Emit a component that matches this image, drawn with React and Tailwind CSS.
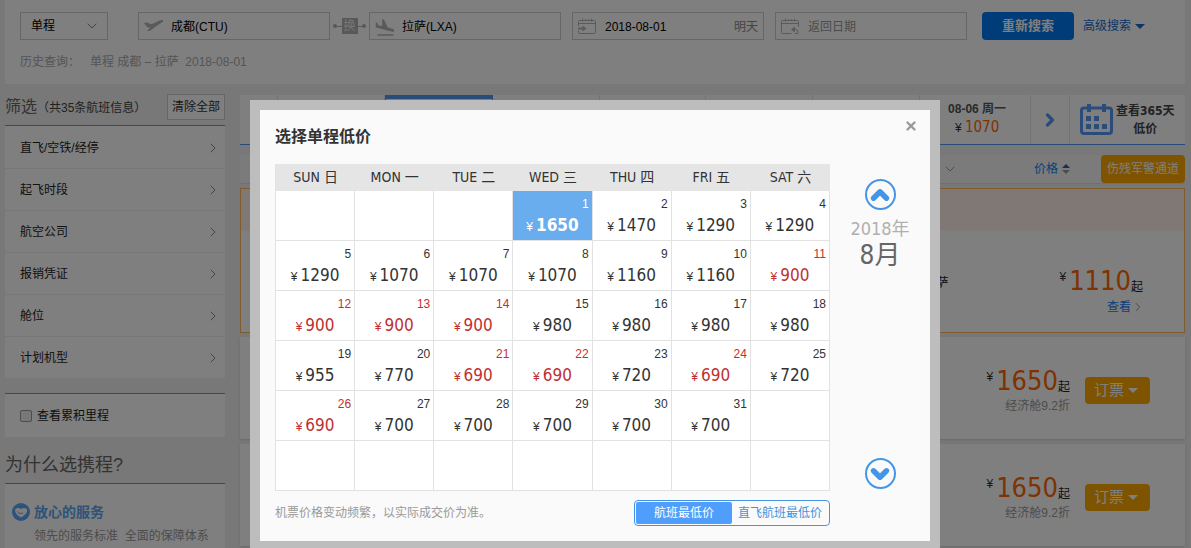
import { ChevronDown, ChevronRight, ChevronUp, X } from 'lucide-react'
import clsx from 'clsx'

const FILTERS = ['直飞/空铁/经停', '起飞时段', '航空公司', '报销凭证', '舱位', '计划机型']

const WEEKDAYS = ['SUN 日', 'MON 一', 'TUE 二', 'WED 三', 'THU 四', 'FRI 五', 'SAT 六']

// lowest fare per day, 1st of August is a Wednesday
const FARES = [
  1650, 1470, 1290, 1290, 1290, 1070, 1070, 1070, 1160, 1160, 900, 900, 900, 900, 980, 980,
  980, 980, 955, 770, 690, 690, 720, 690, 720, 690, 700, 700, 700, 700, 700,
]
const LOW_DAYS = [11, 12, 13, 14, 21, 22, 24, 26]
const FIRST_WEEKDAY = 3
const SELECTED_DAY = 1

const NUM = "font-['DejaVu_Sans_Condensed','Noto_Sans_CJK_SC',sans-serif]"

const weeks = Array.from({ length: 6 }, (_, w) =>
  Array.from({ length: 7 }, (_, d) => {
    const day = w * 7 + d - FIRST_WEEKDAY + 1
    return day >= 1 && day <= FARES.length ? day : null
  })
)

function TakeoffIcon() {
  return (
    <svg viewBox="0 0 20 14" className="w-5 h-3.5 flex-none fill-[#b4b4b4]" aria-hidden="true">
      <path d="M0 4.200 2 3.200 7.500 5.300 15.500 1.600C17 .9 18.700.9 19.200 1.500c.4.700-.4 1.500-1.700 2.300L12.500 7 6.500 11.400 2.800 12.200 6.300 8.300 3.500 8.600z" />
    </svg>
  )
}

function LandingIcon() {
  return (
    <svg viewBox="2 1 20 20" className="w-5 h-5 flex-none fill-[#b4b4b4]" aria-hidden="true">
      <path d="M4.500 19.300h16v1.400h-16zM9.680 14.270l4.350 1.160 5.310 1.420c.8.210 1.620-.260 1.840-1.060.210-.8-.260-1.620-1.060-1.840l-5.310-1.420-3.760-8.020L9.120 4v7.280L5.150 9.950l-.930-2.320-1.450-.390v5.170l1.600.430z" />
    </svg>
  )
}

function DateIcon({ back }) {
  return (
    <svg viewBox="0 0 18 17" className="w-[18px] h-[17px] flex-none" fill="none" stroke="#b4b4b4" aria-hidden="true">
      <path d={back ? 'M17.500 9V3.500a1 1 0 0 0-1-1h-15a1 1 0 0 0-1 1v11a1 1 0 0 0 1 1h9' : 'M.5 8V3.500a1 1 0 0 1 1-1h15a1 1 0 0 1 1 1v11a1 1 0 0 1-1 1h-15a1 1 0 0 1-1-1v-2'} />
      <path d="M.5 5.500h17M4.500.5v3M13.500.5v3M7.500 1v2M10.500 1v2" />
      {back ? (
        <>
          <path d="M11 11.500h3.500a2.500 2.500 0 0 1 2.500 2.500v1.500h-3" />
          <path d="m10 11.500 4-3v6z" fill="#b4b4b4" stroke="none" />
        </>
      ) : (
        <>
          <path d="M0 10.500h5" strokeWidth="2" />
          <path d="m8.500 10.500-4-3v6z" fill="#b4b4b4" stroke="none" />
        </>
      )}
    </svg>
  )
}

function SwapIcon() {
  return (
    <span className="flex items-center w-[33px] mx-[3px]">
      <i className="w-1 h-1 rounded-full bg-[#b0b0b0]" />
      <i className="flex-1 h-px bg-[#b0b0b0]" />
      <span className="w-4 h-4 text-center text-xs leading-4 bg-[#b0b0b0] text-[#eee]">换</span>
      <i className="flex-1 h-px bg-[#b0b0b0]" />
      <i className="w-1 h-1 rounded-full bg-[#b0b0b0]" />
    </span>
  )
}

function CalendarIcon() {
  return (
    <svg viewBox="0 0 33 31" className="w-[33px] h-[31px] flex-none" aria-hidden="true">
      <rect x="1.500" y="4" width="30" height="25.500" rx="2.500" fill="none" stroke="#5599f5" strokeWidth="3" />
      <path d="M7 0h4v8H7zM22 0h4v8h-4z" fill="#5599f5" />
      <path d="M6 12h5v5H6zM14 12h5v5h-5zM6 20h5v5H6zM14 20h5v5h-5zM22 20h5v5h-5z" fill="#5599f5" />
    </svg>
  )
}

function HeartIcon() {
  return (
    <svg viewBox="0 0 18 18" className="w-[18px] h-[18px] flex-none" aria-hidden="true">
      <circle cx="9" cy="9" r="9" fill="#5ba6f5" />
      <path d="M9 14.500C5.500 12.500 3 10 3 7.500 3 5.500 6 4 9 6c3-2 6.200-.8 6.200 1.500 0 2.700-2.700 5-6.200 7z" fill="#fff" />
      <path d="M5.500 8.500c1.200 2 3.500 2.500 5.500 1.500" fill="none" stroke="#5ba6f5" />
    </svg>
  )
}

function Caret({ className }) {
  return (
    <svg viewBox="0 0 10 5" className={clsx('fill-current flex-none', className)} aria-hidden="true">
      <path d="M0 0h10L5 5z" />
    </svg>
  )
}

function SearchField({ label, icon, value, placeholder, note, className }) {
  return (
    <label className={clsx('flex items-center w-[192px] h-7 px-[5px] border border-[#ccc]', className)}>
      {icon}
      <input
        aria-label={label}
        defaultValue={value}
        placeholder={placeholder}
        className="flex-1 min-w-0 pt-px pl-[7px] text-black outline-none placeholder:text-[#999]"
      />
      {note && <span className="pt-px text-[#888]">{note}</span>}
    </label>
  )
}

function SearchBar() {
  return (
    <header className="h-[84px] px-[15px] pt-3 bg-white">
      <div className="flex items-center">
        <div className="relative w-[88px] mr-[30px]">
          <select aria-label="航程类型" className="w-full h-7 pl-[10px] border border-[#ccc] text-black appearance-none">
            <option>单程</option>
          </select>
          <ChevronDown className="absolute right-2 top-1.5 w-4 h-4 text-[#888] pointer-events-none" strokeWidth={1.5} />
        </div>
        <SearchField label="出发城市" icon={<TakeoffIcon />} value="成都(CTU)" />
        <SwapIcon />
        <SearchField label="到达城市" icon={<LandingIcon />} value="拉萨(LXA)" />
        <SearchField label="出发日期" icon={<DateIcon />} value="2018-08-01" note="明天" className="ml-[11px] gap-[2px]" />
        <SearchField label="返回日期" icon={<DateIcon back />} placeholder="返回日期" className="ml-[11px] gap-[2px]" />
        <button className="w-[92px] h-7 ml-[15px] rounded-sm bg-[#0078f0] text-white text-[13px] font-bold">重新搜索</button>
        <a href="#advanced" className="flex items-center gap-1 ml-[9px] text-[#1668d0]">
          高级搜索
          <Caret className="w-[10px] h-[5px]" />
        </a>
      </div>
      <p className="flex mt-3 leading-5 text-[#aaa]">
        <span className="w-[70px]">历史查询：</span>
        <a href="#history">单程 成都 – 拉萨&nbsp; 2018-08-01</a>
      </p>
    </header>
  )
}

function Sidebar() {
  return (
    <aside className="w-[220px] flex-none">
      <div className="flex items-start justify-between h-[31px]">
        <h2 className="leading-7 text-[#666]">
          <span className="text-base">筛选</span>
          <span className="text-[#444]">（共35条航班信息）</span>
        </h2>
        <button className="h-[26px] px-1 border border-[#ccc] bg-white text-[#333]">清除全部</button>
      </div>
      <ul className="pt-px border-t border-[#5599f5] bg-white">
        {FILTERS.map((name) => (
          <li key={name} className="flex items-center justify-between h-[42px] pl-[15px] pr-1 border-b border-[#eee] text-[#222]">
            {name}
            <ChevronRight className="w-4 h-4 text-[#888]" strokeWidth={1.5} />
          </li>
        ))}
      </ul>
      <label className="flex items-center gap-[5px] h-11 mt-[14px] pl-[15px] border-t border-[#5599f5] bg-white text-[#222]">
        <input type="checkbox" className="w-3 h-3 rounded-xs border border-[#999] bg-[#f0f0f0] appearance-none" />
        查看累积里程
      </label>
      <h2 className="pt-[14px] pb-1 text-lg leading-7 text-[#666]">为什么选携程?</h2>
      <div className="h-36 pt-[18px] pl-[7px] border-t border-[#5599f5] bg-white">
        <h3 className="flex items-center gap-1 text-sm leading-5 font-bold text-[#5ba6f5]">
          <HeartIcon />
          放心的服务
        </h3>
        <p className="pl-[22px] mt-1 leading-5 text-[#999]">领先的服务标准&nbsp; 全面的保障体系</p>
      </div>
    </aside>
  )
}

function DateStrip() {
  return (
    <div className="flex h-[50px] border-b border-[#5599f5] bg-white text-center">
      <div className="w-[38px] border-r border-[#e6e6e6]" />
      {[0, 1, 2, 3, 4, 5].map((i) => (
        <div key={i} className={clsx('flex-1 border-r', i === 1 ? 'border-x border-t-4 border-[#5599f5]' : 'border-[#e6e6e6]')} />
      ))}
      <a href="#08-06" className="flex-1 pt-1 pl-1 border-r border-[#e6e6e6]">
        <div className="leading-5 font-bold text-[#555]">08-06 周一</div>
        <div className="leading-4 text-[#333]">
          ¥ <span className={clsx(NUM, 'text-[15px] text-[#ff6600]')}>1070</span>
        </div>
      </a>
      <button aria-label="后一天" className="flex items-center justify-center w-[39px] border-r border-[#e6e6e6]">
        <ChevronRight className="w-5 h-5 text-[#5599f5]" strokeWidth={4} />
      </button>
      <a href="#year" className="flex items-center gap-[3px] w-[115px] pl-[10px] font-bold leading-[18px] text-[#444]">
        <CalendarIcon />
        <span className={NUM}>查看365天<br />低价</span>
      </a>
    </div>
  )
}

function BigPrice({ value }) {
  return (
    <div className="flex justify-end leading-8">
      <span className="leading-6 pr-[3px] text-[#333]">¥</span>
      <span className={clsx(NUM, 'text-[27px] text-[#ff6600]')}>{value}</span>
      <span className="self-end leading-5 text-[#222]">起</span>
    </div>
  )
}

function FlightCard() {
  return (
    <article className="flex items-center justify-end gap-[15px] h-[102px] mb-[5px] pt-1 pr-[35px] bg-white shadow-sm">
      <div className="text-right">
        <BigPrice value={1650} />
        <div className="leading-[18px] text-[#999]">经济舱9.2折</div>
      </div>
      <button className="flex items-center gap-1 h-[27px] px-[9px] rounded-sm bg-[#ffa800] text-white text-[15px]">
        订票
        <Caret className="w-[10px] h-[5px] mr-[3px]" />
      </button>
    </article>
  )
}

function Results() {
  return (
    <main className="flex-1 min-w-0 pt-px">
      <DateStrip />
      <div className="flex items-center justify-end h-[29px] mt-[10px] border-b border-[#e0e0e0] bg-[#f7f7f7]">
        <ChevronDown className="w-4 h-4 mr-[76px] text-[#999]" strokeWidth={1.5} />
        <button className="flex items-center gap-1 mr-[31px] text-[#0086f0]">
          价格
          <span>
            <Caret className="w-2 h-1 mb-[2px] rotate-180 text-[#2a5fae]" />
            <Caret className="w-2 h-1 text-[#999]" />
          </span>
        </button>
        <button className="w-[84px] h-7 rounded-sm bg-[#ffa800] text-white">伤残军警通道</button>
      </div>
      <article className="flex justify-end h-[145px] mt-1 mb-1 pr-[41px] border border-[#ffb75a] bg-linear-to-b from-[#fff0e8] from-28% to-white to-30%">
        <span className="mt-[84px] mr-[111px] leading-5 text-[#222]">萨</span>
        <div className="mt-[76px] text-right">
          <BigPrice value={1110} />
          <a href="#detail" className="flex items-center justify-end leading-5 text-[#1b7cf0]">
            查看
            <ChevronRight className="w-3.5 h-3.5 -mr-[2px] text-[#888]" strokeWidth={1.5} />
          </a>
        </div>
      </article>
      <FlightCard />
      <FlightCard />
    </main>
  )
}

function DayCell({ day }) {
  if (!day) return <td className="h-[50px] border-r border-b border-[#e2e2e2] bg-white" />
  const selected = day === SELECTED_DAY
  return (
    <td
      className={clsx(
        'h-[50px] p-0 border-r border-b border-[#e2e2e2] align-top',
        selected ? 'bg-[#6aadef] text-white' : 'bg-white',
        !selected && (LOW_DAYS.includes(day) ? 'text-[#c03030]' : 'text-[#333]')
      )}
    >
      <div className="pt-1 pr-[3px] text-right leading-[18px]">{day}</div>
      <div className="flex items-baseline justify-center gap-[3px] leading-6">
        ¥<span className={clsx(NUM, 'text-[17px]', selected && 'font-bold')}>{FARES[day - 1]}</span>
      </div>
    </td>
  )
}

function RoundButton({ label, icon: Icon }) {
  return (
    <button aria-label={label} className="flex items-center justify-center w-[31px] h-[31px] border-2 border-[#4595e6] rounded-full text-[#4595e6]">
      <Icon className="w-[26px] h-[26px] flex-none" strokeWidth={5} />
    </button>
  )
}

function LowPriceDialog() {
  return (
    <div className="fixed inset-0 flex items-start justify-center pt-[100px] pr-px bg-black/50">
      <section role="dialog" aria-label="选择单程低价" className="w-[690px] flex-none p-[10px] bg-[#bdbdbd]">
        <div className="pl-[15px] bg-[#fafafa]">
          <div className="flex items-center justify-between h-[54px] pr-[11px]">
            <h2 className="text-base font-bold text-[#333]">选择单程低价</h2>
            <button aria-label="关闭" className="self-start mt-2 p-px text-[#999]">
              <X className="w-3.5 h-3.5" strokeWidth={4} />
            </button>
          </div>
          <div className="flex">
            <table className="w-[555px] table-fixed border-separate border-spacing-0 border-l border-[#e2e2e2]">
              <thead>
                <tr className="bg-[#e5e5e5]">
                  {WEEKDAYS.map((name) => (
                    <th key={name} className={clsx(NUM, 'h-[27px] p-0 text-[14px] font-normal text-[#333]')}>{name}</th>
                  ))}
                </tr>
              </thead>
              <tbody>
                {weeks.map((week, w) => (
                  <tr key={w}>
                    {week.map((day, d) => <DayCell key={d} day={day} />)}
                  </tr>
                ))}
              </tbody>
            </table>
            <div className="flex-1 flex flex-col items-center pt-[15px] pb-[2px]">
              <RoundButton label="上个月" icon={ChevronUp} />
              <div className={clsx(NUM, 'mt-[7px] text-lg leading-6 text-[#b0b0b0]')}>2018年</div>
              <div className={clsx(NUM, 'mb-auto text-[26px] leading-7 text-[#666]')}>8月</div>
              <RoundButton label="下个月" icon={ChevronDown} />
            </div>
          </div>
          <div className="flex items-start justify-between w-[555px] h-[50px] pt-[9px]">
            <p className="leading-[26px] text-[#999]">机票价格变动频繁，以实际成交价为准。</p>
            <div className="flex h-[26px] p-px border border-[#4595e6] rounded-sm">
              <button className="w-24 rounded-xs bg-[#4f9efc] text-white">航班最低价</button>
              <button className="w-24 text-[#3f93e0]">直飞航班最低价</button>
            </div>
          </div>
        </div>
      </section>
    </div>
  )
}

export default function App() {
  return (
    <div className="h-screen overflow-hidden pl-[5px] pr-1.5 bg-[#f0f0f0] font-['Liberation_Sans','Noto_Sans_CJK_SC',sans-serif] text-xs">
      <SearchBar />
      <div className="flex gap-[15px] mt-[10px]">
        <Sidebar />
        <Results />
      </div>
      <LowPriceDialog />
    </div>
  )
}
